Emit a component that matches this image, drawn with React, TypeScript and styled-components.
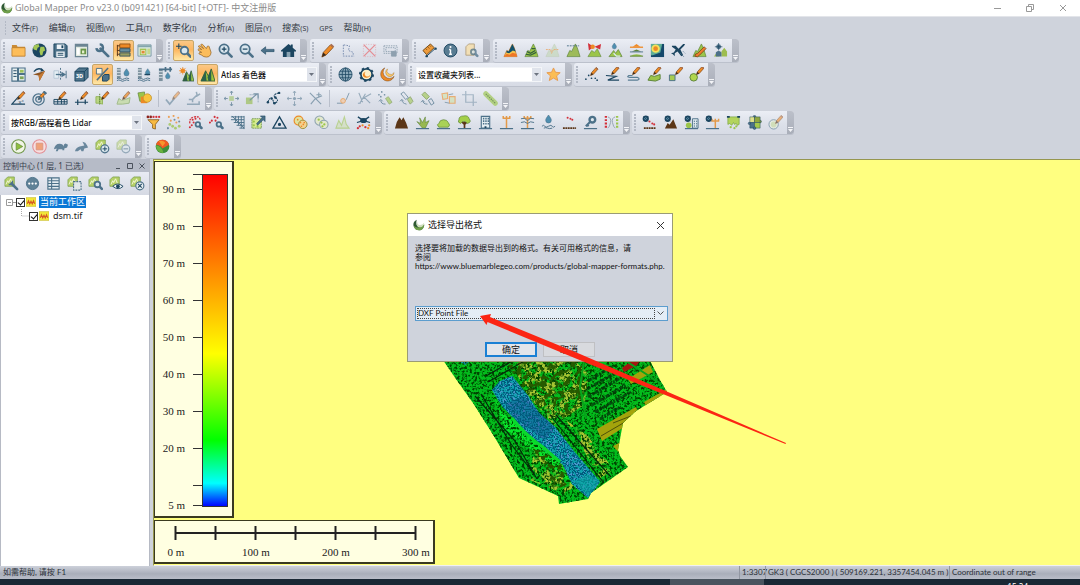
import React, { ReactNode } from "react";
import styled, { createGlobalStyle, css } from "styled-components";

const GlobalStyle = createGlobalStyle`
  * { box-sizing: border-box; }
  html, body { margin: 0; padding: 0; }
  body {
    background: #cfd3dc;
    color: #1e1e1e;
    font-family: "Noto Sans", "Noto Sans CJK SC", sans-serif;
    font-size: 9px;
    line-height: 12px;
  }
  button, select { font: inherit; color: inherit; margin: 0; padding: 0; }
`;

/* ---------- palette and shared icon parts ---------- */

const N = "#1b4560";
const S = "#4c7189";
const O = "#ee8a26";
const G = "#9bc54a";
const DG = "#5b8238";
const B = "#5b3617";
const R = "#d3303a";

const Pencil = ({ x = 5, y = 11 }: { x?: number; y?: number }) => (
  <g>
    <path d={`M${x} ${y}l1-3 5-5.6 2 1.8-5 5.6z`} fill={O} stroke="#7a4614" strokeWidth=".7" />
    <path d={`M${x} ${y}l1-3 2 1.8z`} fill="#3b2a1c" />
    <path d={`M${x + 5.2} ${y - 7.6}l.9-.9 2 1.8-.9.9z`} fill="#a66b50" />
  </g>
);

const Lens = ({ x, y, r = 3 }: { x: number; y: number; r?: number }) => (
  <g fill="#d9e6ee" stroke={S} strokeWidth="1.9" strokeLinecap="round">
    <path d={`M${x + r * 0.8} ${y + r * 0.8}l${r * 0.8} ${r * 0.8}`} strokeWidth="2.8" />
    <circle cx={x} cy={y} r={r} />
  </g>
);

const Peaks = ({ fill = G, stroke = DG }: { fill?: string; stroke?: string }) => (
  <path d="M1 14.500L4 8l2 1 4-8 2 4 3 9.500z" fill={fill} stroke={stroke} strokeWidth=".7" />
);

const Ground = ({ color = S }: { color?: string }) => (
  <path d="M1 14.500h14" stroke={color} strokeWidth="1.300" />
);

const Dots = ({ at, c, r = 0.9 }: { at: number[][]; c: string; r?: number }) => (
  <g fill={c}>
    {at.map(([x, y]) => (
      <circle key={`${x}-${y}`} cx={x} cy={y} r={r} />
    ))}
  </g>
);

const Sheet = () => (
  <g>
    <path d="M4 1h7v10H1V4z" fill="#b5d068" stroke="#7ba04c" strokeWidth=".8" />
    <path d="M2 9l2-4 1 2 2-4 2 5" fill="none" stroke="#f5f8dc" strokeWidth="1" />
  </g>
);

const Drop = ({ x = 8, y = 1 }: { x?: number; y?: number }) => (
  <path d={`M${x} ${y}c2 3 3 4 3 5.500a3 3 0 0 1-6 0c0-1.500 1-2.500 3-5.500z`} fill="#4f8fb0" stroke={S} strokeWidth=".6" />
);

const Pole = ({ x = 8, top = 1 }: { x?: number; top?: number }) => (
  <path d={`M${x} 14V${top}M${x - 4} ${top + 2.5}h8M${x - 3.5} ${top}v3M${x + 3.5} ${top}v3`} stroke="#e39a4a" strokeWidth="1.600" fill="none" />
);

const Gear = ({ x = 4, y = 4 }: { x?: number; y?: number }) => (
  <g>
    <circle cx={x} cy={y} r="2.400" fill="#7cb0c8" stroke={N} strokeWidth="1.900" />
    <path d={`M${x - 2.6} ${y - 2.6}l5.200 5.200M${x + 2.6} ${y - 2.6}l-5.200 5.200`} stroke={N} strokeWidth=".9" />
  </g>
);

const Levels = () => (
  <g>
    <path d="M3 1v11" stroke="#7d919e" strokeWidth="4" />
    <path d="M1 3h4M1 6h4M1 9h4" stroke="#dce3e9" />
    <path d="M1 12.500q2-1.500 4 0t4 0 5 0M1 14.500q2-1.500 4 0t4 0 5 0" fill="none" stroke={S} strokeWidth="1" />
  </g>
);

const icons: Record<string, ReactNode> = {
  folder: <g><path d="M1 2h5l1 2h8v10H1z" fill="#c98a35" /><path d="M1 5h14v9H1z" fill="#fdbd59" stroke="#b97c2b" strokeWidth=".8" /></g>,
  globe: <g><circle cx="8" cy="8" r="7.500" fill={N} /><path d="M3 2l4-1 1 3-2 1-1 3-3-1-1-2zM9 4l4 0 1 4-2 1-1 4-2 0-1-4zM6 3l3-1" fill="#a3c755" /></g>,
  save: <g><path d="M1 1h12l2 2v12H1z" fill={S} stroke={N} /><path d="M4 1.500h8v5H4zM3.500 9h9v6h-9z" fill="#eef3f7" /><path d="M9 2.500h2v3H9z" fill={N} /><path d="M5 11h6M5 13h6" stroke={N} /></g>,
  config: <g><path d="M1.500 1.500h13v13h-13z" fill="#e2eae0" stroke="#6b8593" strokeWidth="1.300" /><path d="M1.500 3h13" stroke="#6b8593" strokeWidth="2" /><path d="M3 5.500h3v7H3z" fill="#fff" /><path d="M7 6h6v6H7z" fill="#6a9648" /><path d="M8.500 8h2.500v3H8.500z" fill="#e5eecb" /></g>,
  wrench: <g fill="none" stroke={S}><path d="M6 6l8 8" strokeWidth="3" strokeLinecap="round" /><path d="M5 1.500a3.500 3.500 0 1 1-3.500 4" strokeWidth="2.600" /><path d="M1 1l3 3" stroke="#e4e8f0" strokeWidth="2" /></g>,
  layers: <g><path d="M4 1h11v4H4z" fill={O} stroke="#824713" strokeWidth=".8" /><path d="M4 6h11v3.500H4z" fill="#678c9c" stroke={N} strokeWidth=".8" /><path d="M4 10.500h11V14H4z" fill="#9a9c60" stroke={N} strokeWidth=".8" /><path d="M1.500 2v12M1 3h3M1 8h3M1 12h3" stroke={B} /></g>,
  layout: <g><path d="M1 2h14v12H1z" fill="#d9e8e2" stroke="#7b9aa5" /><path d="M1 3.500h14" stroke="#83a5ad" strokeWidth="2" /><path d="M3 6h7v7H3z" fill="#a2c453" /><path d="M4.500 8h4v3.500h-4z" fill="#e18a36" stroke="#fff" strokeWidth=".6" /><path d="M11 6h3v6h-3z" fill="#c5da8b" /></g>,
  zoomTool: <g><Lens x={9} y={8} r={4} /><path d="M0 3.500h6M3 .5v6" stroke={N} strokeWidth="1.100" /></g>,
  hand: <path d="M5 10L1.500 8Q.5 6.500 2 6l3 1L1.500 4Q1.500 2.500 3 3l4 3L4 2q.5-1.500 2-.5L10 6l1-2.500q1.500-1 2 .5L15 10q-.5 5-5 5-3 0-5-2L2 11.500Q2 9.500 5 10z" fill="#fbbc5b" stroke="#96672b" strokeWidth=".8" />,
  zoomIn: <g><Lens x={6.5} y={6.5} r={5} /><path d="M4 6.500h5M6.500 4v5" stroke={N} strokeWidth="1.300" /></g>,
  zoomOut: <g><Lens x={6.5} y={6.5} r={5} /><path d="M4 6.500h5" stroke={N} strokeWidth="1.300" /></g>,
  back: <path d="M1 8l5-4v2.800h9v2.400H6V12z" fill={S} stroke={N} strokeWidth=".6" />,
  home: <g><path d="M0 8l8-7 2.500 2V1.500h2V5L16 8v1h-2v6H2V9H0z" fill={N} /><path d="M6 9.500h4V15H6z" fill="#8aa4b3" /></g>,
  pencil: <g><path d="M2 15l1.500-5L11 2l3 2.800-7.500 8z" fill={O} stroke="#7a4614" strokeWidth=".8" /><path d="M2 15l1.500-5 3 2.800z" fill="#3b2a1c" /><path d="M11 2l1.200-1.200 3 2.800L14 4.800z" fill="#a66b50" /></g>,
  selectArea: <path d="M2.500 2v12H14M3 2l6 1-1 5 5 2v4" fill="none" stroke="#7489ad" strokeDasharray="1.600 1.300" />,
  cross: <g fill="none" stroke="#e58d94"><path d="M1.500 1.500h13v13h-13z" strokeDasharray="1 1.600" opacity=".6" /><path d="M2 2l12 12M14 2L2 14" strokeWidth="1.400" /></g>,
  selectLock: <g fill="none" stroke="#8fa1b0"><path d="M1 3h14v8H1z" strokeDasharray="1.500 1" /><path d="M3 5h10v4H3z" strokeDasharray="1.500 1" /><path d="M9 9h5v5H9z" fill="#8ea0af" /></g>,
  ruler: <g><path d="M1 8l8-7 4 4-8 7.500z" fill="#ef9c3c" stroke="#704713" /><path d="M4 6l1.500 1.500M6 4l2 2M8 2.500L9.500 4" stroke="#704713" strokeWidth=".7" /><path d="M5 14l9-8" stroke={N} /><Dots at={[[5, 14], [14.5, 6]]} c={N} r={1.3} /></g>,
  info: <g><circle cx="8" cy="8" r="6.900" fill="#587c92" stroke={N} /><path d="M8 7v5M6.500 7H8M6.500 12h3" stroke="#fff" strokeWidth="1.500" /><circle cx="8" cy="4.300" r="1.100" fill="#fff" /></g>,
  sheetSearch: <g><path d="M5 1h6v12H2V4z" fill="#f2dfb5" stroke="#b4a384" /><g opacity=".75"><Lens x={10} y={9.5} r={2.6} /></g></g>,
  elev: <g><Peaks fill="#f4c44c" stroke="#c36b24" /><path d="M4 8l2 1 4-8 2 4 1.500 4-3-1-4 3-3-1z" fill="#10506b" /><path d="M1 14.500l3-3 3 1 3-2 4 1 1 3z" fill="#ef7627" /></g>,
  contours: <g><Peaks /><path d="M3 9l4 2 5-3M2 12l5 1 6-3M8 6l4 0" fill="none" stroke="#33603a" strokeWidth="1.300" /></g>,
  flood: <g opacity=".6"><Peaks fill="#c3d8b4" stroke="#b4c4a2" /><path d="M1 7h5l1 4 2-4h6" stroke={O} fill="none" strokeDasharray="2 .8" /></g>,
  flatten: <g><Peaks fill="#9dbb59" /><path d="M1 3h13" stroke={S} strokeDasharray="2 1" /></g>,
  viewshed: <g><path d="M1 14.500L5 8l3 2 3-4 4 8.500z" fill={G} stroke={DG} strokeWidth=".6" /><path d="M1 0l6 4-5 4zM15 1L8 4l6 3z" fill={R} /><circle cx="6" cy="4" r="2.400" fill={O} /></g>,
  watershed: <g><path d="M1 14.500L6 8l2 3 3-4 4 7.500z" fill={G} stroke={DG} strokeWidth=".7" /><path d="M6 11l3 3h4" stroke="#dcebf0" strokeWidth="1.500" fill="none" /><g transform="scale(.75)"><Drop x={9} y={0} /></g></g>,
  compareTerrain: <g><path d="M4 4l4-3 4 3z" fill={O} /><path d="M1 4.500h14" stroke={O} strokeWidth="1.400" /><path d="M3 9l5-2 5 2z" fill={DG} /><path d="M1 9.500h14" stroke={S} /><path d="M1 14q7-4 14 0z" fill={G} /><path d="M1 14h14" stroke={DG} /></g>,
  heat: <g><path d="M1 1h14v14H1z" fill="#14486b" /><path d="M1 1h12L11 10l-8 3H1z" fill="#5fae97" /><circle cx="6" cy="6" r="4.500" fill="#f4e15c" /><circle cx="6" cy="6" r="2.500" fill={O} /></g>,
  plane: <g><path d="M1 3h4l3 3 5-5 2 0-1 2-4 4 3 6-2 1-4-5-3 2v3l-2-2-2-1 3-1 2-3-4-3z" fill={N} /><path d="M10 11l4 4M13 9l2 2" stroke={S} strokeDasharray="1 1" /></g>,
  terrainPaint: <g><Peaks /><path d="M3 14q0-3 3-3l7-7 2 2-7 7q-2 3-5 1z" fill="#ee7c2c" stroke={B} strokeWidth=".7" /></g>,
  perspective: <g><path d="M9 14.500V9l3-4 3 4v5.500zM1 14.500L4 10l3 4.500z" fill="#9dbd4f" /><circle cx="6" cy="4" r="2.600" fill={S} /><path d="M3 14.500V10q3-3 6 0v4.500z" fill={S} /><path d="M2 4h8M6 0v8" stroke={N} strokeWidth=".7" /></g>,

  multiView: <g><path d="M1 1h6v14H1zM8 1h7v6H8zM8 8h7v7H8z" fill="#e6eff0" stroke={S} strokeWidth="1.200" /><path d="M2.500 4H6M2.500 7H6M2.500 10H6" stroke={N} /><path d="M9.500 3h4v3h-4z" fill="#9dc15a" /><path d="M9.500 10h4v3h-4z" fill="#7ea65a" /></g>,
  north: <g><path d="M2 5q4-5 9-2" stroke={N} strokeWidth="1.400" fill="none" /><path d="M10 1l3 3-4 1z" fill={N} /><path d="M1 8l13-4-6 11-1-6z" fill="#8d5524" /><path d="M7 9l7-5-6 11z" fill="#c57a34" /></g>,
  mirror: <g><path d="M8 1v14" stroke={S} strokeDasharray="2 1.500" /><path d="M1 4h5v8H1z" fill="#e4eef4" stroke="#b8c8d6" /><path d="M9 5l5 3-5 3z" fill={S} /><path d="M3 8h8" stroke={S} strokeWidth="1.400" /><path d="M14 4v8" stroke={S} /></g>,
  cube: <g><path d="M1 5l4-4h10v10l-4 4H1z" fill="#4f748b" stroke={N} /><path d="M1 5h10v10M11 5l4-4" fill="none" stroke={N} /><text x="2" y="12" fontSize="6" fontWeight="700" fill="#fff">3D</text></g>,
  toggle3d: <g><path d="M1.500 1.500h6v6h-6z" fill="#fff3da" stroke={S} /><path d="M2 14L14 1" stroke={S} strokeWidth="1.600" /><path d="M8 10l2-2h5v5l-2 2H8z" fill={S} stroke={N} /></g>,
  waterUp: <g><Levels /><g transform="translate(4 1) scale(.9)"><Drop /></g></g>,
  waterDown: <g><Levels /><g transform="translate(5 1) scale(.8)"><Drop /></g><path d="M8 8h6" stroke={N} strokeWidth="1.500" /></g>,
  waterSet: <g><path d="M3 2v13" stroke="#7d919e" strokeWidth="4" /><path d="M1 5h4M1 8h4M1 11h4" stroke="#dce3e9" /><path d="M1 2.500h14M8 0v5M13 0v5" stroke={S} strokeWidth="1.800" /><g transform="translate(4 5) scale(.8)"><Drop /></g></g>,
  sunTerrain: <g><circle cx="4" cy="4" r="2.500" fill={O} /><path d="M4 0v8M0 4h8M1 1l6 6M7 1L1 7" stroke={O} strokeWidth=".8" /><path d="M4 15l4-10 3 5 2-6 3 11z" fill={G} stroke="#245239" strokeWidth=".7" /><path d="M8 5l1 10H4zM13 4v11h-2l-1-3z" fill="#2f5f45" /></g>,
  shader: <g><path d="M1 15L6 4l3 6 3-8 4 13z" fill="#a0c33b" stroke="#1d5137" strokeWidth=".8" /><path d="M6 4l1 11H1zM12 2v13H9l-1-4z" fill="#2c624a" /></g>,
  wireGlobe: <g fill="#8dabbb" stroke={N} strokeWidth=".8"><circle cx="8" cy="8" r="7" /><ellipse cx="8" cy="8" rx="3.500" ry="7" /><path d="M8 1v14M1 8h14M2 4.500h12M2 11.500h12" /></g>,
  gearSun: <g><circle cx="8" cy="8" r="6" fill="#fff0c8" stroke={N} strokeWidth="1.800" /><circle cx="8" cy="8" r="7" fill="none" stroke={N} strokeWidth="2" strokeDasharray="2.500 3" /><path d="M4 8a4 4 0 1 0 8-1 3 3 0 1 1-5-2 4 4 0 0 0-3 3z" fill={O} /></g>,
  crescent: <g><path d="M5 1A7.300 7.300 0 1 0 15 10 6 6 0 0 1 5 1z" fill={O} stroke="#84501b" strokeWidth=".6" /><path d="M8 2a4.500 4.500 0 1 0 7 4 3.500 3.500 0 0 1-7-4z" fill="#fbc964" stroke="#b9771f" strokeWidth=".5" /></g>,
  star: <path d="M8 1l2.100 4.600 5 .5-3.800 3.300 1.200 5L8 11.800 3.500 14.400l1.200-5L.9 6.100l5-.5z" fill="#fbbd54" stroke="#e79b4f" />,
  drawPoint: <g><Pencil x={7} y={9} /><Dots at={[[2, 13], [5, 9], [8, 12], [12, 12], [14, 14]]} c={N} /></g>,
  drawLine: <g><Pencil x={7} y={8} /><path d="M1 9l11 1-9 4h12" fill="none" stroke={N} strokeWidth="1.200" /></g>,
  drawCurve: <g><Pencil x={7} y={8} /><path d="M7 9H3q-3 2 1 2h8q4 2 0 3H2" fill="none" stroke="#5a7e94" strokeWidth="1.200" /></g>,
  drawArea: <g><path d="M1 14l3-5 4 1 6-2v5l-5 2z" fill={G} stroke={DG} /><Pencil x={7} y={8} /></g>,
  drawRect: <g><path d="M1.500 8.500h6v6h-6z" fill="#a8cc50" stroke={S} /><Pencil x={8} y={8} /></g>,
  drawCircle: <g><circle cx="5" cy="11" r="4" fill="#b1d64c" stroke={DG} /><Pencil x={8} y={8} /></g>,

  angle: <g><path d="M9 5L1 14h14" fill="none" stroke={N} strokeWidth="1.200" /><Pencil x={7} y={9} /><text x="8" y="14" fontSize="6" fill={N}>x°</text></g>,
  target: <g fill="none" stroke={S} strokeWidth="1.300"><circle cx="7" cy="9" r="6" /><circle cx="7" cy="9" r="3" /><Pencil x={7} y={9} /></g>,
  grid: <g><path d="M1 9h14v5H1zM1 11.500h14M5 9v5M9 9v5M12 9v5" stroke={N} fill="none" /><Pencil x={6} y={9} /></g>,
  cogoLine: <g><path d="M1 12h14M4 9v6M12 9v5" stroke={N} strokeWidth="1.300" /><Pencil x={7} y={9} /></g>,
  trace: <g><path d="M1 6h4v7H1zM5 6l3 2v6l-3-1" fill="#b9d584" stroke="#94b55b" /><path d="M5 3v12" stroke={DG} strokeDasharray="1.500 1" /><Pencil x={7} y={9} /></g>,
  editArea: <g opacity=".75"><path d="M1 14l2-6 3 2 4-1 5-2-1 6-7 1z" fill="#c3db9f" stroke="#8cae6b" /><Pencil x={7} y={9} /></g>,
  combine: <g><path d="M1 2l7-1v6l-2 4H3z" fill={G} stroke={DG} strokeWidth=".7" /><path d="M4 6h7v7H4z" fill={O} /><circle cx="11" cy="7.500" r="4.500" fill="#f9c33e" stroke="#b88b28" strokeWidth=".7" /></g>,
  tick: <g opacity=".5"><path d="M1 9l4 5 5-6" stroke={S} strokeWidth="1.800" fill="none" /><Pencil x={8} y={9} /></g>,
  wrenchBox: <g opacity=".5" fill="none" stroke={S} strokeWidth="1.600"><path d="M1 14h13v-3M3 9h4v3M6 10l6-6M15 3l-3 2-1-4" /></g>,
  move: <g opacity=".7"><path d="M5.500 5.500h5v5h-5z" fill="#a8c77a" /><path d="M8 0v4M8 12v4M0 8h4M12 8h4M6.500 2L8 0l1.500 2M6.500 14L8 16l1.500-2M2 6.500L0 8l2 1.500M14 6.500L16 8l-2 1.500" stroke={S} fill="none" /></g>,
  scale: <g opacity=".7"><path d="M1 7h7v7H1z" fill="#9bbf5b" /><path d="M5 10l8-7M9 3h5v5" stroke={S} strokeWidth="1.200" fill="none" /><path d="M5 4h9v9" stroke={S} strokeDasharray="1 1" fill="none" /></g>,
  vertex: <g><path d="M2 12q2-6 4-4t2 4 3 0-1-5 4-5" fill="none" stroke={N} strokeWidth="1.100" strokeDasharray="2 .7" /><Dots at={[[2, 12], [6, 8], [10, 7], [14, 2], [9, 13]]} c={N} r={1.3} /></g>,
  moveVertex: <g opacity=".55"><circle cx="8" cy="8" r="1.700" fill={S} /><path d="M8 0v5M8 11v5M0 8h5M11 8h5M6.500 2L8 0l1.500 2M6.500 14L8 16l1.500-2M2 6.500L0 8l2 1.500M14 6.500L16 8l-2 1.500" stroke={S} fill="none" /></g>,
  split: <path opacity=".6" d="M2 2l12 12M15 5L8 8l-5 6M9 4h5M11.500 1.500v5" stroke={S} fill="none" strokeWidth="1.200" />,
  joinLine: <g opacity=".65"><path d="M1 13h6l4-4 3-7" stroke={S} fill="none" /><circle cx="7.500" cy="10.500" r="2.500" fill="#f7c599" stroke={O} /></g>,
  cutLine: <path opacity=".5" d="M2 2l4 10M9 3L3 13M1 13h3M6 8l9-5M7 6l7 7" stroke={S} fill="none" strokeWidth="1.200" />,
  rotatePts: <g opacity=".75"><path d="M8 8l3-2 4 6-3 2z" fill="#a9cb68" stroke="#76944c" strokeWidth=".7" /><Dots at={[[1, 4], [4, 1], [7, 4], [3, 6]]} c={S} /><path d="M3 10q0 4 5 4M1 11l2-2 2 2" stroke={S} fill="none" /></g>,
  rotateA: <g opacity=".7"><path d="M9 9l3-3 3 5-3 3z" fill="#a9cb68" stroke="#76944c" /><path d="M2 3l3-2 5 6-3 2zM3 9q0 4 5 5M1 11l2-2 2 2" fill="none" stroke={S} /></g>,
  rotateB: <g opacity=".75"><path d="M2 4l3-3 5 5-3 3z" fill="#a9cb68" stroke="#76944c" /><path d="M9 10l3-2 3 5-3 2zM3 10q0 4 5 4M1 12l2-2 2 2" fill="none" stroke={S} /></g>,
  align: <g opacity=".6"><path d="M1 3l6-1v6l-5 1zM9 6h6v7H9z" fill="#cfe2aa" stroke={O} strokeWidth="1.200" /><path d="M4 12l5 1M8 4l5-1" stroke={S} /></g>,
  crop: <path opacity=".4" d="M4 0v12h12M0 4h12v12" fill="none" stroke={S} strokeWidth="1.300" />,
  buffer: <g opacity=".8"><path d="M3 3l10 10" stroke="#a8cc69" strokeWidth="5.500" strokeLinecap="round" /><path d="M3 3l10 10" stroke={DG} strokeDasharray="1.500 1" strokeWidth="1.300" /></g>,

  filter: <g><Dots at={[[2, 2], [5, 2]]} c="#8d241d" r={1.4} /><Dots at={[[8, 2], [11, 2], [14, 2]]} c={R} r={1.2} /><path d="M2 5h12l-4 5v5l-3-1v-4z" fill="#f8ba42" stroke="#7c5117" strokeWidth=".8" /></g>,
  points: <g opacity=".75"><Dots at={[[2, 2], [7, 1], [12, 3], [4, 6], [10, 8]]} c={O} r={1.1} /><Dots at={[[3, 10], [6, 12], [13, 12], [9, 14]]} c={G} r={1.5} /><Dots at={[[13, 7], [1, 14], [8, 5]]} c={S} r={1.1} /></g>,
  findRed: <g><path d="M2 9q-1-6 5-7 6-1 6 4" stroke={R} strokeDasharray="2 1" fill="none" strokeWidth="1.400" /><Dots at={[[5, 5], [8, 4], [6, 8], [2, 13], [4, 11]]} c={R} r={1.1} /><Lens x={10.5} y={10} r={2.4} /></g>,
  findPts: <g><Dots at={[[6, 2], [9, 3], [3, 6], [1, 8], [7, 6]]} c={R} r={1.1} /><Lens x={10.5} y={10} r={2.4} /></g>,
  thin: <path d="M1 2h14M1 5h14M4 8h11M7 11h8M10 14h5M2 1l13 13M6 1v7M9 1v10M12 1v13M15 1v14" stroke={S} strokeWidth="1" />,
  exportPts: <g><path d="M1 4h10v10H1z" fill="#d6eb92" stroke="#799d54" strokeDasharray="2 .5" /><Dots at={[[3, 7], [3, 11], [7, 12]]} c={G} r={1.2} /><path d="M6 9l6-6-2-2h5v6l-2-2-6 6z" fill={S} stroke={N} strokeWidth=".6" /></g>,
  tin: <g fill="none" stroke={N} strokeWidth="1.400"><path d="M8 2l7 12H1z" /><circle cx="8" cy="10" r="1" fill={N} /></g>,
  classify: <g><circle cx="6" cy="6" r="4.800" fill="#dfe3a0" stroke={O} strokeWidth="1.200" /><circle cx="10.500" cy="10" r="4.500" fill="#f2d390" stroke="#9b8e38" strokeWidth="1" /><Dots at={[[5, 5], [8, 8], [11, 10], [9, 12], [12, 8]]} c={O} /></g>,
  segment: <g><g fill="#e3e8ce" stroke="#8ea3b0" strokeWidth="1.100"><circle cx="6" cy="6" r="5" /><circle cx="10.500" cy="10" r="4.500" /></g><Dots at={[[5, 5], [8, 8], [11, 10], [9, 12]]} c={G} r={1.2} /></g>,
  tree3: <g opacity=".55"><path d="M1 14l3-8 3 5 3-9 2 8 3 4z" fill="#d0dfb0" stroke={G} strokeWidth="1.200" /></g>,
  network: <g><path d="M8 6L2 2M8 6l6-4M8 6l-7 2M8 6l7 2M4 4h8" stroke={N} strokeWidth="1.300" /><ellipse cx="8" cy="6" rx="3.600" ry="2.600" fill={N} /><Dots at={[[4, 12], [10, 13], [2, 14]]} c={R} r={1.2} /><Dots at={[[7, 11], [14, 11], [13, 14]]} c={O} r={1.2} /></g>,
  ground: <path d="M1 14.500l2-7 3-5 2 3 2-3 3 6 2 6z" fill={B} />,
  lowVeg: <g><path d="M8 14L2 7l4 2-1-6 3 5 3-6v6l4-2-4 8z" fill="#98b850" stroke={DG} strokeWidth=".6" /><Ground /></g>,
  medVeg: <g><path d="M3 13Q0 10 3 9q1-4 5-4 4 0 5 3 3 3 0 5z" fill="#a9d257" stroke={DG} strokeWidth=".7" /><Ground /></g>,
  highVeg: <g><path d="M8 14V7M5 7l3 3 3-3" stroke={B} strokeWidth="1.800" fill="none" /><path d="M4 9Q0 8 2 5q0-4 5-4 5-1 6 3 3 4-2 5l-2-2H6z" fill="#a3cf48" stroke={DG} strokeWidth=".7" /><Ground /></g>,
  building: <g><path d="M3.500 1.500h9V14h-9z" fill="#e5eef2" stroke={S} strokeWidth="1.200" /><path d="M6 3v8M8.500 3v8M11 3v8" stroke={S} strokeWidth="1.500" strokeDasharray="1.700 1" /><path d="M7 12h2v2H7z" fill={N} /><Ground /></g>,
  pole: <g><Pole /><Ground /></g>,
  wires: <g><Pole /><path d="M1 4q4-2 7 2 3-4 7-2M1 8q4-2 7 1 3-3 7-1" stroke={S} fill="none" /><Ground /></g>,
  water: <g><g transform="translate(0 -1)"><Drop /></g><path d="M1 12q2-2 3 0t4 0 4 0 3 0M3 14q2-1 4 0t5 0" fill="none" stroke={S} /></g>,
  noise: <g><Dots at={[[6, 3], [9, 4], [11, 5]]} c={R} r={1.1} /><path d="M1 14h14" stroke={B} strokeWidth="1.700" strokeDasharray="2 .6" /></g>,
  keyPoint: <g><circle cx="10" cy="5" r="3" fill="#dfe9ef" stroke={S} strokeWidth="2.600" /><path d="M8 7l-5 5M4 10l2 2" stroke={S} strokeWidth="2.200" /><Ground /></g>,
  compareClass: <g><path d="M2 1v14" stroke={R} strokeWidth="2.400" strokeDasharray="2 1.500" /><path d="M14 1v14" stroke={G} strokeWidth="2.400" strokeDasharray="2 1.500" /><path d="M4 2q4 1 3 6t-3 6M12 2q-4 1-3 6t3 6" fill="none" stroke="#93a2b1" /></g>,
  autoGround: <g><Gear /><Dots at={[[8, 7], [11, 9], [13, 10]]} c={R} r={1.1} /><path d="M2 14h13" stroke={B} strokeWidth="1.700" strokeDasharray="2 .6" /></g>,
  autoNoise: <g><path d="M2 14.500l3-6 2 2 4-6 4 10z" fill={B} /><Gear x={5} y={4} /></g>,
  autoBuild: <g><path d="M9 4h6v10H9z" fill="#e0eaef" stroke={S} /><path d="M11 6v7M13.500 6v7" stroke={S} strokeDasharray="1.500 1" /><circle cx="5" cy="11" r="3" fill={G} /><Gear /><Ground /></g>,
  autoPole: <g><Pole x={11} top={4} /><Gear /><Ground /></g>,
  extract: <g><path d="M2 2h12v8l-2 1-1-2-2 1-1-2-2 3-2-2-2 1z" fill="#b3d45c" stroke="#7ea848" strokeWidth=".8" /><path d="M1 2h3M12 2h3" stroke={N} strokeWidth="2" /><Dots at={[[5, 13], [9, 14], [11, 12]]} c={G} r={1.2} /></g>,
  puzzle: <g stroke={N} strokeWidth=".5"><circle cx="8" cy="1.800" r="1.400" fill={S} /><circle cx="14" cy="7" r="1.400" fill="#8fa63e" /><path d="M3 2h5v6H3z" fill="#dfe08a" /><path d="M8 2h6v6H8z" fill="#8fa63e" /><path d="M3 8h5v6H3z" fill={S} /><path d="M8 8h6v6H8z" fill="#a5c94b" /><circle cx="2.500" cy="9" r="1.200" fill={S} /><circle cx="8" cy="14" r="1.400" fill={S} /></g>,
  paintClass: <g opacity=".6"><circle cx="6" cy="10" r="5" fill="#e8efdc" stroke={S} /><circle cx="6" cy="10" r="3" fill="#c9dc9a" /><Pencil x={8} y={9} /></g>,

  play: <g><circle cx="8" cy="8" r="7.200" fill="#f1f5e6" stroke="#71984a" strokeWidth="1.200" /><path d="M5.500 4l7 4-7 4z" fill="#8fbf3d" stroke={DG} strokeWidth=".7" /></g>,
  stop: <g><circle cx="8" cy="8" r="7.200" fill="#f6dfe1" stroke="#e39096" strokeWidth="1.200" /><path d="M4.500 4.500h7v7h-7z" fill="#efa27a" stroke="#dc9580" /></g>,
  turtle: <path opacity=".85" d="M1 11q1-6 6-6 4 0 4 3 1-4 3-3l2 1-1 3-3 1v2h-2v-1H6l-1 2H3l1-3z" fill={S} />,
  rabbit: <path opacity=".8" d="M1 13q1-4 5-5l5-1-2-4 3 1 2 3 1 2-4 1-1 3h-2l-1-2-3 2z" fill={S} />,
  addSheet: <g><Sheet /><circle cx="10.500" cy="10.500" r="4.200" fill="#dce8ee" stroke={S} strokeWidth="1.300" /><path d="M8 10.500h5M10.500 8v5" stroke={N} /></g>,
  removeSheet: <g opacity=".5"><Sheet /><circle cx="10.500" cy="10.500" r="4.200" fill="#dce8ee" stroke={S} strokeWidth="1.300" /><path d="M8 10.500h5" stroke={N} /></g>,
  ball: <g><circle cx="8" cy="8" r="7.300" fill="#3f8f3c" /><path d="M1 6A7.300 7.300 0 0 1 15 6L8 10Q5 6 1 6z" fill="#ef5a24" /><path d="M4 2q5-1 7 2L8 8z" fill="#f7972c" /><path d="M1 7q6 0 8 8-7 0-8-8z" fill="#6cb33f" /></g>,

  sheetTool: <g><Sheet /><path d="M8 8l6 6" stroke={S} strokeWidth="2.800" strokeLinecap="round" /><path d="M9 5v4H5" stroke={S} strokeWidth="1.500" fill="none" /></g>,
  more: <g><circle cx="8" cy="8" r="6.500" fill="#5f8196" stroke={S} /><Dots at={[[4.5, 8], [8, 8], [11.5, 8]]} c="#fff" r={1.2} /></g>,
  table: <path d="M2 2h12v12H2zM2 5h12M2 8h12M2 11h12M6 2v12" fill="#e2ebf0" stroke={S} strokeWidth="1.200" />,
  sheetSelect: <g><Sheet /><path d="M7 6h8v9H7z" fill="#e0e7e9" stroke={S} strokeWidth="1.200" strokeDasharray="2 1" /></g>,
  sheetZoom: <g><Sheet /><Lens x={10} y={9} r={3} /></g>,
  sheetEye: <g><Sheet /><path d="M4 11q5-5 11 0-5 5-11 0z" fill="#edf2f4" stroke={N} /><circle cx="9.500" cy="11" r="2" fill={N} /></g>,
  sheetClose: <g><Sheet /><circle cx="10.500" cy="10.500" r="4.300" fill="#e8eef1" stroke={S} strokeWidth="1.200" /><path d="M8.500 8.500l4 4M12.500 8.500l-4 4" stroke={N} strokeWidth="1.200" /></g>,
  raster: <g><path d="M0 1h16v14H0z" fill="#f2e838" stroke="#c7b92b" /><path d="M2 11l2-5 2 5 2-4 2 4 2-5 2 5" fill="none" stroke="#d65a26" strokeWidth="1.800" /></g>,
};

const Glyph = styled.svg<{ $size?: number }>`
  display: block;
  flex: none;
  width: ${(p) => p.$size ?? 16}px;
  height: ${(p) => p.$size ?? 16}px;
`;

const Icon = ({ name, size }: { name: string; size?: number }) => (
  <Glyph viewBox="0 0 16 16" $size={size} aria-hidden="true">{icons[name]}</Glyph>
);

const Logo = ({ size = 12 }: { size?: number }) => (
  <Glyph viewBox="0 0 16 16" $size={size} aria-hidden="true">
    <path d="M5 1Q-1 4 1 10q3 6 9 5 5-2 5-8-3 5-7 4-5-2-3-10z" fill="#2f5a34" />
    <path d="M1 9q5 5 14-1-1 7-7 7T1 9z" fill="#6f9f4a" />
    <path d="M6 3q-1 5 3 5 4 0 6-3-1 6-6 6-6-1-3-8z" fill="#cddcba" />
  </Glyph>
);

/* ---------- window frame ---------- */

const Page = styled.div`
  display: flex;
  flex-direction: column;
  min-height: 100vh;
  overflow: hidden;
`;

const TitleBar = styled.header`
  display: flex;
  align-items: center;
  height: 17px;
  padding: 0 12px 0 1px;
  gap: 2px;
  background: #fff;
  border-bottom: 1px solid #e3e5ea;
  color: #8b8b8b;
`;

const WindowTitle = styled.h1`
  flex: 1;
  margin: 0;
  font-size: 9px;
  font-weight: 400;
  white-space: nowrap;
`;

const WindowButtons = styled.div`
  display: flex;
  gap: 23px;
`;

const PlainButton = styled.button`
  display: grid;
  place-items: center;
  border: 0;
  background: none;
`;

const MenuBar = styled.nav`
  display: flex;
  align-items: center;
  height: 22px;
  gap: 11px;
  padding: 0 1px 0 3px;
  color: #333a44;
`;

const MenuItem = styled.a`
  color: inherit;
  text-decoration: none;
  white-space: nowrap;
  font-size: 9px;
  small { font-size: 7px; }
`;

const Grip = styled.span<{ $height?: number }>`
  flex: none;
  width: 7px;
  height: ${(p) => p.$height ?? 17}px;
  background: radial-gradient(circle at 3px 1px, #b3b9c5 1px, transparent 1px) 0 0 / 7px 3px;
`;

const MenuGrip = styled(Grip)`
  width: 3px;
  margin-right: -5px;
`;

/* ---------- toolbars ---------- */

const ToolRow = styled.div<{ $gap: number }>`
  display: flex;
  gap: ${(p) => p.$gap}px;
  height: 24px;
  padding-left: 1px;
`;

const Bar = styled.div`
  display: flex;
  align-items: center;
  height: 23px;
  border-radius: 3px;
  background: linear-gradient(#ebeef5, #dce0e9 60%, #d7dbe5);
  box-shadow: 0 1px 0 #bcc1cc;
`;

const Overflow = styled.button`
  align-self: stretch;
  display: grid;
  place-items: end center;
  width: 7px;
  margin-left: 1px;
  padding-bottom: 2px;
  border: 0;
  border-radius: 0 3px 3px 0;
  background: linear-gradient(#bcc0ca, #a9aeb9);
`;

const Tool = styled.button<{ $active?: boolean }>`
  display: grid;
  place-items: center;
  width: 21px;
  height: 21px;
  border: 1px solid transparent;
  border-radius: 2px;
  background: none;
  ${(p) => p.$active && css`
    border-color: #c8a667;
    background: linear-gradient(#fbc887, #fdb65f 45%, #ffe8a6);
  `}
`;

const Divider = styled.span`
  width: 1px;
  height: 17px;
  margin: 0 3px;
  background: #b9bfcb;
`;

const Picker = styled.span<{ $width: number }>`
  position: relative;
  display: block;
  flex: none;
  width: ${(p) => p.$width}px;
  height: 15px;
  margin: 0 1px;
`;

const PickerSelect = styled.select`
  appearance: none;
  display: block;
  width: 100%;
  height: 100%;
  padding-left: 1px;
  border: 1px solid #f3f5f8;
  border-radius: 0;
  background: #fff;
  color: #111;
  font-size: 8px;
  font-weight: 500;
  line-height: 12px;
`;

const PickerArrow = styled.span`
  position: absolute;
  top: 1px;
  right: 1px;
  bottom: 1px;
  display: grid;
  place-items: center;
  width: 9px;
  background: #dfe3eb;
  pointer-events: none;
`;

type Entry = string | { pick: string; width: number } | null;
type Group = Entry[];

const active = new Set(["layers", "zoomTool", "toggle3d", "shader"]);

const rows: { gap: number; groups: Group[] }[] = [
  { gap: 3, groups: [
    ["folder", "globe", "save", "config", "wrench", "layers", "layout"],
    ["zoomTool", "hand", "zoomIn", "zoomOut", "back", "home"],
    ["pencil", "selectArea", "cross", "selectLock"],
    ["ruler", "info", "sheetSearch"],
    ["elev", "contours", "flood", "flatten", "viewshed", "watershed", "compareTerrain", "heat", "plane", "terrainPaint", "perspective"],
  ] },
  { gap: 2, groups: [
    ["multiView", "north", "mirror", "cube", "toggle3d", "waterUp", "waterDown", "waterSet", "sunTerrain", "shader", { pick: "Atlas 着色器", width: 98 }],
    ["wireGlobe", "gearSun", "crescent"],
    [{ pick: "设置收藏夹列表...", width: 126 }, "star"],
    ["drawPoint", "drawLine", "drawCurve", "drawArea", "drawRect", "drawCircle"],
  ] },
  { gap: 2, groups: [
    ["angle", "target", "grid", "cogoLine", "trace", "editArea", "combine", null, "tick", "wrenchBox"],
    ["move", "scale", "vertex", "moveVertex", "split", null, "joinLine", "cutLine", "rotatePts", "rotateA", "rotateB", "align", "crop", "buffer"],
  ] },
  { gap: 2, groups: [
    [{ pick: "按RGB/高程着色 Lidar", width: 133 }, "filter", "points", "findRed", "findPts", "thin", "exportPts", "tin", "classify", "segment", "tree3", "network"],
    ["ground", "lowVeg", "medVeg", "highVeg", "building", "pole", "wires", "water", "noise", "keyPoint", "compareClass"],
    ["autoGround", "autoNoise", "autoBuild", "autoPole", "extract", "puzzle", "paintClass"],
  ] },
  { gap: 3, groups: [
    ["play", "stop", "turtle", "rabbit", "addSheet", "removeSheet"],
    ["ball"],
  ] },
];

const ToolGroup = ({ items }: { items: Group }) => (
  <Bar role="toolbar">
    <Grip />
    {items.map((it, i) => {
      if (it === null) return <Divider key={i} />;
      if (typeof it === "string")
        return (
          <Tool key={it} type="button" aria-label={it} $active={active.has(it)}>
            <Icon name={it} size={15} />
          </Tool>
        );
      return (
        <Picker key={it.pick} $width={it.width}>
          <PickerSelect aria-label={it.pick}><option>{it.pick}</option></PickerSelect>
          <PickerArrow><svg width="5" height="3"><path d="M0 0h5L2.500 3z" fill="#6d7480" /></svg></PickerArrow>
        </Picker>
      );
    })}
    <Overflow type="button" aria-label="More">
      <svg width="5" height="5"><path d="M0 0h5v1H0zM0 2h5L2.500 5z" fill="#f4f5f8" /></svg>
    </Overflow>
  </Bar>
);

/* ---------- layer panel ---------- */

const Main = styled.main`
  display: flex;
  flex: 1;
  min-height: 407px;
`;

const SidePanel = styled.aside`
  display: flex;
  flex-direction: column;
  flex: none;
  width: 150px;
  margin-right: 3px;
  border-right: 1px solid #b6bac4;
  background: #fff;
`;

const PanelHead = styled.div`
  display: flex;
  align-items: center;
  justify-content: space-between;
  height: 13px;
  padding: 0 3px;
  background: #b6bbc7;
  color: #39414d;
  h2 { margin: 0; font-size: 8px; font-weight: 400; white-space: nowrap; }
`;

const PanelControls = styled.div`
  display: flex;
  gap: 4px;
`;

const PanelTools = styled.div`
  display: flex;
  align-items: center;
  height: 23px;
  padding-left: 1px;
  background: linear-gradient(#e8ebf3, #d5d9e3);
`;

const Tree = styled.ul`
  flex: 1;
  margin: 0;
  padding: 0 0 0 5px;
  border-left: 1px solid #b6bac4;
  list-style: none;
  ul { margin: 0; padding: 0 0 0 14px; list-style: none; }
`;

const TreeRow = styled.label`
  display: flex;
  align-items: center;
  height: 14px;
`;

const TreeName = styled.span<{ $selected?: boolean }>`
  margin-left: 3px;
  padding: 0 1px;
  color: ${(p) => (p.$selected ? "#fff" : "#222")};
  background: ${(p) => (p.$selected ? "#0a78d6" : "none")};
`;

const Check = styled.input`
  appearance: none;
  position: relative;
  width: 9px;
  height: 9px;
  margin: 0 1px 0 0;
  border: 1px solid #333;
  background: #fff;
  &:checked::after {
    content: "";
    position: absolute;
    left: 2px;
    top: 0;
    width: 3px;
    height: 5px;
    border: solid #111;
    border-width: 0 1px 1px 0;
    transform: rotate(40deg);
  }
`;

/* ---------- map ---------- */

const MapView = styled.section`
  position: relative;
  flex: 1;
  border: 1px solid #96964e;
  border-width: 1px 0 0 1px;
  border-bottom: 1px solid #f1f1f1;
  background: #ffff80;
  overflow: hidden;
`;

const Overlays = styled.div`
  position: absolute;
  top: 1px;
  left: 0;
  display: flex;
  flex-direction: column;
  align-items: flex-start;
  gap: 2px;
`;

const Chart = styled.svg`
  display: block;
  border: 1px solid #3a3a20;
  border-width: 1px 2px 2px 1px;
  background: #ffffe1;
  font-family: "Liberation Serif", serif;
  font-size: 11px;
  fill: #222;
`;

const Raster = styled.svg`
  position: absolute;
  left: 289px;
  top: 191px;
`;

const legendMarks = [[28, "90 m"], [65, "80 m"], [102, "70 m"], [139, "60 m"], [176, "50 m"], [213, "40 m"], [250, "30 m"], [287, "20 m"], [324, ""], [344, "5 m"]] as const;

const Legend = () => (
  <Chart width="80" height="357">
    <defs>
      <linearGradient id="ramp" x1="0" y1="0" x2="0" y2="1">
        <stop offset="0" stopColor="#f00" />
        <stop offset=".27" stopColor="#ff8000" />
        <stop offset=".54" stopColor="#ff0" />
        <stop offset=".8" stopColor="#0f0" />
        <stop offset=".93" stopColor="#0ff" />
        <stop offset="1" stopColor="#00f" />
      </linearGradient>
    </defs>
    <rect x="47.500" y="12.500" width="25" height="332" fill="url(#ramp)" stroke="#333" />
    <path d="M38 12.500h9" stroke="#333" />
    {legendMarks.map(([y, t]) => (
      <g key={y}>
        <path d={`M38 ${y - 0.5}h9`} stroke="#333" />
        <text x="30" y={y + 3} textAnchor="end">{t}</text>
      </g>
    ))}
  </Chart>
);

const ScaleBar = () => (
  <Chart width="281" height="44">
    <path d="M20 12h241" stroke="#222" strokeWidth="2" />
    {[0, 1, 2, 3, 4, 5, 6].map((i) => (
      <path key={i} d={`M${20.5 + i * 40} 5v14`} stroke="#222" strokeWidth="2" />
    ))}
    {[0, 100, 200, 300].map((v) => (
      <text key={v} x={21 + v * 0.8} y="35" textAnchor="middle">{v} m</text>
    ))}
  </Chart>
);

const water = "M492 390l8-9 12-5 9 11 8 10 10 16 16 14 18 23 27 32-12 16-16-14-9-19-18-14-28-29-15-16z";

const Terrain = () => (
  <Raster width="228" height="154" viewBox="443 351 228 154" aria-hidden="true">
    <defs>
      <clipPath id="site">
        <path d="M437 351l8 12 13 19 15 21 19 30 27 45 24 11 15 7 1 8 29-5 3-6 37-26-8-11-2-6 5-27 13-12 31-19-7-12-10-19z" />
      </clipPath>
      <filter id="speckle" x="0" y="0" width="1" height="1">
        <feTurbulence type="fractalNoise" baseFrequency=".4" numOctaves="4" seed="4" />
        <feColorMatrix values="0 0 0 0 0  0 0 0 0 .06  0 0 0 0 0  5 0 0 0 -2.300" />
      </filter>
      <filter id="olive" x="0" y="0" width="1" height="1">
        <feTurbulence type="fractalNoise" baseFrequency=".11" numOctaves="3" seed="21" />
        <feColorMatrix values="0 0 0 0 .38  0 0 0 0 .55  0 0 0 0 .03  0 9 0 0 -4" />
        <feComposite in2="SourceGraphic" operator="in" />
      </filter>
      <filter id="clumps" x="0" y="0" width="1" height="1">
        <feTurbulence type="fractalNoise" baseFrequency=".17" numOctaves="3" seed="9" />
        <feColorMatrix values="0 0 0 0 .02  0 0 0 0 .1  0 0 0 0 0  9 0 0 0 -4.600" />
        <feComposite in2="SourceGraphic" operator="in" />
      </filter>
      <filter id="ripple" x="0" y="0" width="1" height="1">
        <feTurbulence type="fractalNoise" baseFrequency=".65" numOctaves="3" seed="2" />
        <feColorMatrix values="0 0 0 0 0  0 0 0 0 .1  0 0 0 0 .2  7 0 0 0 -3.100" />
        <feComposite in2="SourceGraphic" operator="in" />
      </filter>
      <filter id="glint" x="0" y="0" width="1" height="1">
        <feTurbulence type="fractalNoise" baseFrequency=".3" numOctaves="3" seed="12" />
        <feColorMatrix values="0 0 0 0 .08  0 0 0 0 .3  0 0 0 0 .62  0 8 0 0 -4.200" />
        <feComposite in2="SourceGraphic" operator="in" />
      </filter>
    </defs>
    <g clipPath="url(#site)">
      <path d="M437 350h235v156H437z" fill="#03bc1c" />
      <path d="M507 355h62l20 20-5 30-30 20-25-28zM534 448l26 6 18 30-14 10-34-14zM566 420l22 16 26 34-14 8z" filter="url(#olive)" />
      <path d="M444 351h39l-18 14z" fill="#1590b6" />
      <path d="M492 390l8 20 42 38 24 20 10 20-26-24-45-35z" fill="#09e62a" />
      <rect x="440" y="350" width="232" height="156" filter="url(#speckle)" />
      <path d="M507 365l20-10h60v40l-20 24-25-8-20-24zM532 448l28 10 14 24-20 8z" filter="url(#clumps)" />
      <path d={water} fill="#10a3b0" />
      <path d={water} filter="url(#glint)" />
      <path d="M505 404l18-8 32 32-10 12-28-20z" fill="#123c84" opacity=".4" />
      <path d={water} filter="url(#ripple)" />
      <path d="M574 482l14-8 12 6-12 17z" fill="#0aa6a0" opacity=".6" />
      <path d="M597 429l39-22 3 8-13 8v3l-24 15zM644 402l25-14v7l-22 13zM628 379l22-14 3 7-22 12zM613 446l10-5-1 15z" fill="#a3a30c" />
      <path d="M601 436l36-21M613 423l18-7" stroke="#4c520a" fill="none" />
      <path d="M622 368l8-6 10-1-4 5-12 6z" fill="#a5150f" />
      <path d="M475 396l40 45 22 38M481 394l30 50 23 30M556 415l55 62M550 415l54 68M486 376l35-20M488 382l38-22" stroke="#05290a" fill="none" strokeWidth="1.200" />
      <path d="M512 418q12 16 32 30l16 14" stroke="#0ad82c" strokeWidth="3" fill="none" />
      <path d="M584 361l-4 26 6 32M626 361l40 26" stroke="#08a51c" strokeWidth="2" fill="none" />
      <g stroke="#04380d" strokeWidth="3" strokeDasharray="4 1 2 1" opacity=".8" fill="none">
        <path d="M588 381l25-15M587 389l32-18M588 397l34-20M592 405l34-20M595 412l36-20M600 419l20-12" />
      </g>
    </g>
  </Raster>
);

/* ---------- dialog ---------- */

const DialogLayer = styled.div`
  position: absolute;
  inset: 0 0 10px;
  display: grid;
  place-items: center;
  pointer-events: none;
`;

const Dialog = styled.div`
  position: relative;
  display: flex;
  flex-direction: column;
  width: 266px;
  border: 1px solid #9b9c74;
  background: #cfd3dc;
  color: #111;
  font-family: Lato, "Noto Sans CJK SC", sans-serif;
  font-size: 8px;
  line-height: 9px;
  pointer-events: auto;
`;

const DialogTitle = styled.div`
  display: flex;
  align-items: center;
  gap: 3px;
  height: 22px;
  padding: 0 7px 0 5px;
  background: #fff;
  h2 { flex: 1; margin: 0; font-size: 9px; line-height: 12px; font-weight: 400; }
`;

const DialogText = styled.p`
  margin: 8px 7px 35px;
  white-space: nowrap;
`;

const FormatPicker = styled.span`
  position: relative;
  display: block;
  height: 15px;
  margin: 0 4px 21px 7px;
  border: 1px solid #5c9dce;
  background: #e4edf6;
`;

const FormatSelect = styled.select`
  appearance: none;
  display: block;
  width: calc(100% - 13px);
  height: 11px;
  margin: 1px;
  border: 1px dotted #444;
  border-radius: 0;
  background: none;
  font-size: 8px;
  line-height: 9px;
`;

const Chevron = styled.svg`
  position: absolute;
  right: 3px;
  top: 4px;
  pointer-events: none;
`;

const DialogActions = styled.div`
  display: flex;
  justify-content: center;
  gap: 6px;
  padding: 0 0 4px 0;
`;

const DialogButton = styled.button<{ $primary?: boolean }>`
  width: 52px;
  height: 15px;
  border: ${(p) => (p.$primary ? "2px solid #1a80d4" : "1px solid #bfc0c3")};
  background: ${(p) => (p.$primary ? "#e2e5ea" : "#d8dade")};
  font-size: 9px;
  line-height: 11px;
`;

const Arrow = styled.svg`
  position: absolute;
  left: 72px;
  top: 99px;
  overflow: visible;
  pointer-events: none;
`;

/* ---------- status ---------- */

const StatusBar = styled.footer`
  display: flex;
  height: 13px;
  padding-left: 3px;
  background: linear-gradient(#cdd1da, #a9aeba 60%, #b9bdc8);
  color: #2c3138;
  font-family: Lato, "Noto Sans CJK SC", sans-serif;
  font-size: 8px;
  line-height: 13px;
  white-space: nowrap;
`;

const StatusCell = styled.span<{ $width?: number }>`
  ${(p) => (p.$width ? `width: ${p.$width}px; padding-left: 2px; border-left: 1px solid #9297a3;` : "flex: 1;")}
`;

const TaskBar = styled.div`
  display: flex;
  justify-content: flex-end;
  height: 6px;
  padding-right: 52px;
  overflow: hidden;
  background: #1a2835;
  color: #fff;
  font-size: 8px;
  line-height: 12px;
`;

const TaskButton = styled.span`
  width: 94px;
  margin-right: 244px;
  background: #4a545f;
`;

const Clock = styled.time`
  padding-top: 2px;
`;

const menus = [["文件", "(F)"], ["编辑", "(E)"], ["视图", "(W)"], ["工具", "(T)"], ["数字化", "(I)"], ["分析", "(A)"], ["图层", "(Y)"], ["搜索", "(S)"], ["", "GPS"], ["帮助", "(H)"]];

export default function App() {
  return (
    <Page>
      <GlobalStyle />
      <TitleBar>
        <Logo />
        <WindowTitle>Global Mapper Pro v23.0 (b091421) [64-bit] [+OTF]- 中文注册版</WindowTitle>
        <WindowButtons>
          <PlainButton type="button" aria-label="Minimize"><svg width="10" height="10"><path d="M2 5.500h7" stroke="#999" /></svg></PlainButton>
          <PlainButton type="button" aria-label="Restore"><svg width="10" height="10" fill="none" stroke="#999"><path d="M1.500 3.500h5v5h-5zM3.500 3V1.500h5v5H7" /></svg></PlainButton>
          <PlainButton type="button" aria-label="Close"><svg width="10" height="10"><path d="M2 2l6 6M8 2L2 8" stroke="#999" /></svg></PlainButton>
        </WindowButtons>
      </TitleBar>
      <MenuBar>
        <MenuGrip $height={14} />
        {menus.map(([name, key]) => (
          <MenuItem key={key} href="#">{name}<small>{key}</small></MenuItem>
        ))}
      </MenuBar>
      {rows.map((row, i) => (
        <ToolRow key={i} $gap={row.gap}>
          {row.groups.map((g, j) => <ToolGroup key={j} items={g} />)}
        </ToolRow>
      ))}
      <Main>
        <SidePanel>
          <PanelHead>
            <h2>控制中心 (1 层, 1 已选)</h2>
            <PanelControls>
              <PlainButton type="button" aria-label="Collapse"><svg width="8" height="8"><path d="M2 6.500h4" stroke="#4a515c" /></svg></PlainButton>
              <PlainButton type="button" aria-label="Maximize"><svg width="8" height="8"><path d="M1.500 1.500h5v5h-5z" fill="none" stroke="#4a515c" /></svg></PlainButton>
              <PlainButton type="button" aria-label="Close panel"><svg width="8" height="8"><path d="M1.500 1.500l5 5M6.500 1.500l-5 5" stroke="#4a515c" /></svg></PlainButton>
            </PanelControls>
          </PanelHead>
          <PanelTools>
            {["sheetTool", "more", "table", "sheetSelect", "sheetZoom", "sheetEye", "sheetClose"].map((n) => (
              <Tool key={n} type="button" aria-label={n}><Icon name={n} size={15} /></Tool>
            ))}
          </PanelTools>
          <Tree>
            <li>
              <TreeRow>
                <svg width="10" height="9"><path d="M.5 1.500h6v6h-6zM2 4.500h3M7 4.500h3" fill="none" stroke="#9a9a9a" /></svg>
                <Check type="checkbox" defaultChecked />
                <Icon name="raster" size={10} />
                <TreeName $selected>当前工作区</TreeName>
              </TreeRow>
              <ul>
                <li>
                  <TreeRow>
                    <svg width="9" height="14"><path d="M1.500 0v7H9" fill="none" stroke="#aaa" strokeDasharray="1 1" /></svg>
                    <Check type="checkbox" defaultChecked />
                    <Icon name="raster" size={10} />
                    <TreeName>dsm.tif</TreeName>
                  </TreeRow>
                </li>
              </ul>
            </li>
          </Tree>
        </SidePanel>
        <MapView>
          <Terrain />
          <Overlays>
            <Legend />
            <ScaleBar />
          </Overlays>
        </MapView>
      </Main>
      <StatusBar>
        <StatusCell>如需帮助, 请按 F1</StatusCell>
        <StatusCell $width={26}>1:3307</StatusCell>
        <StatusCell $width={184}>GK3 ( CGCS2000 ) ( 509169.221, 3357454.045 m )</StatusCell>
        <StatusCell $width={131}>Coordinate out of range</StatusCell>
      </StatusBar>
      <TaskBar>
        <TaskButton />
        <Clock>15:24</Clock>
      </TaskBar>
      <DialogLayer>
        <Dialog role="dialog" aria-labelledby="format-title">
          <DialogTitle>
            <Logo />
            <h2 id="format-title">选择导出格式</h2>
            <PlainButton type="button" aria-label="Close dialog"><svg width="9" height="9"><path d="M1 1l7 7M8 1L1 8" stroke="#333" /></svg></PlainButton>
          </DialogTitle>
          <DialogText>
            选择要将加载的数据导出到的格式。有关可用格式的信息，请<br />
            参阅<br />
            https://www.bluemarblegeo.com/products/global-mapper-formats.php.
          </DialogText>
          <FormatPicker>
            <FormatSelect aria-labelledby="format-title"><option>DXF Point File</option></FormatSelect>
            <Chevron width="7" height="5"><path d="M.5.500l3 3 3-3" fill="none" stroke="#555" /></Chevron>
          </FormatPicker>
          <DialogActions>
            <DialogButton type="button" $primary>确定</DialogButton>
            <DialogButton type="button">取消</DialogButton>
          </DialogActions>
          <Arrow width="307" height="130" viewBox="480 313 307 130" aria-hidden="true">
            <path d="M480 316l11-2-1 3 90 37 206 89-.5 1-206-84-92-38-1 3z" fill="#fb2514" />
          </Arrow>
        </Dialog>
      </DialogLayer>
    </Page>
  );
}
